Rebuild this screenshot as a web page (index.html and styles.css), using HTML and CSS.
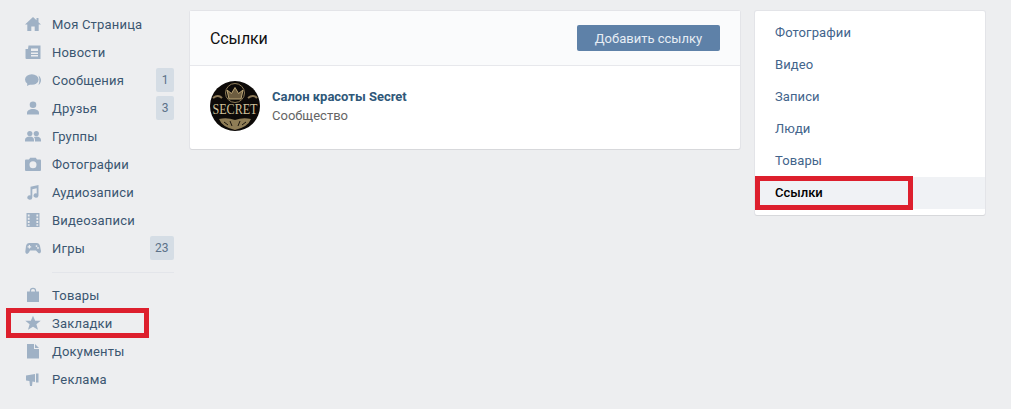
FILE: index.html
```html
<!DOCTYPE html>
<html lang="ru">
<head>
    <meta charset="UTF-8">
    <title>Ссылки</title>
    <link rel="stylesheet" href="styles.css">
</head>
<body>

<div class="page">
    <nav class="side-menu">
        <a class="side-item">
            <svg class="side-icon" viewBox="0 0 16 16"><path d="M8 1L0 8.500h2.300V15h4V10.500h3.400V15h4V8.500H16L13.500 6.200V2h-2v2.300z"/></svg>
            <span class="side-label">Моя Страница</span>
        </a>
        <a class="side-item">
            <svg class="side-icon" viewBox="0 0 16 16"><path fill-rule="evenodd" d="M3.500 1.500H15.500V15H1.500a1 1 0 0 1-1-1V5H3zM6 4.500V7h7V4.500zM6 8.500V10h7V8.500zM6 11v1.500h7V11z"/></svg>
            <span class="side-label">Новости</span>
        </a>
        <a class="side-item">
            <svg class="side-icon" viewBox="0 0 16 16"><ellipse cx="6.800" cy="7.500" rx="6.800" ry="5.300"/><path d="M2.500 10.500L2 14l4-2zM13.500 3.500c3.300 2.500 3.300 7 0 9.500 1.200-3.200 1.200-6.300 0-9.500z"/></svg>
            <span class="side-label">Сообщения</span>
            <span class="badge">1</span>
        </a>
        <a class="side-item">
            <svg class="side-icon" viewBox="0 0 16 16"><circle cx="8" cy="4.800" r="3.300"/><path d="M2 14.500v-1.800c0-2 2.500-3.700 6-3.700s6 1.700 6 3.700v1.800z"/></svg>
            <span class="side-label">Друзья</span>
            <span class="badge">3</span>
        </a>
        <a class="side-item">
            <svg class="side-icon" viewBox="0 0 16 16"><circle cx="4.800" cy="5.500" r="2.600"/><circle cx="11.300" cy="5.500" r="2.600"/><path d="M0 13.500v-1.500c0-2 2-3.500 4.800-3.500S9 10 9 12v1.500zM10 13.500V12c0-1.300-.4-2.300-1.100-3 .7-.3 1.500-.5 2.400-.5 2.700 0 4.700 1.500 4.700 3.500v1.500z"/></svg>
            <span class="side-label">Группы</span>
        </a>
        <a class="side-item">
            <svg class="side-icon" viewBox="0 0 16 16"><path fill-rule="evenodd" d="M1 3.500h3L5.200 1.800h5.600L12 3.500h3a1 1 0 0 1 1 1V14a1 1 0 0 1-1 1H1a1 1 0 0 1-1-1V4.500a1 1 0 0 1 1-1zM8 5.300a3.500 3.500 0 1 0 0 7 3.500 3.500 0 0 0 0-7z"/></svg>
            <span class="side-label">Фотографии</span>
        </a>
        <a class="side-item">
            <svg class="side-icon" viewBox="0 0 16 16"><path d="M5.500 2.800L13.500 1v10.500a2.500 2.200 0 1 1-1.800-2.100V4.200L7.300 5.200v8.300a2.500 2.200 0 1 1-1.800-2.100z"/></svg>
            <span class="side-label">Аудиозаписи</span>
        </a>
        <a class="side-item">
            <svg class="side-icon" viewBox="0 0 16 16"><path fill-rule="evenodd" d="M1.500 1h13v14h-13zM2.800 2.500v2h1.800v-2zM2.800 5.800v2h1.800v-2zM2.800 9v2h1.800V9zM2.800 12.200v1.500h1.800v-1.500zM11.400 2.500v2h1.800v-2zM11.400 5.800v2h1.800v-2zM11.400 9v2h1.800V9zM11.400 12.200v1.500h1.800v-1.500z"/></svg>
            <span class="side-label">Видеозаписи</span>
        </a>
        <a class="side-item">
            <svg class="side-icon" viewBox="0 0 16 16"><path fill-rule="evenodd" d="M4.300 3h7.400c1.800 0 2.800 1 3.300 3l.9 4.500c.3 1.700-.5 2.700-1.600 2.700-.9 0-1.500-.6-2.100-1.500L11 10.500H5l-.9 1.700c-.6.900-1.200 1.500-2.100 1.500-1.100 0-1.900-1-1.600-2.700L1 6c.5-2 1.500-3 3.300-3zM3.800 5v1.200H2.600v1.200h1.200v1.200H5V7.400h1.200V6.200H5V5zM11.500 5.200a.9.900 0 1 0 0 1.800.9.900 0 0 0 0-1.800zM13 7a.9.900 0 1 0 0 1.800.9.900 0 0 0 0-1.800z"/></svg>
            <span class="side-label">Игры</span>
            <span class="badge">23</span>
        </a>

        <div class="side-sep"></div>

        <a class="side-item">
            <svg class="side-icon" viewBox="0 0 16 16"><path fill-rule="evenodd" d="M2 4.500h2.800V4a3.200 3.200 0 0 1 6.400 0v.5H14V15H2zM6 4.500h4V4a2 2 0 0 0-4 0z"/></svg>
            <span class="side-label">Товары</span>
        </a>
        <a class="side-item">
            <svg class="side-icon" viewBox="0 0 16 16"><path d="M8 .8l2.200 5h5.500l-4.300 3.500 1.600 5.500L8 11.700l-5 3.100 1.600-5.500L.3 5.800h5.500z"/></svg>
            <span class="side-label">Закладки</span>
            <span class="mark mark-side"></span>
        </a>
        <a class="side-item">
            <svg class="side-icon" viewBox="0 0 16 16"><path d="M2 1h7v5h5v9.500H2zM10 1l4 4h-4z"/></svg>
            <span class="side-label">Документы</span>
        </a>
        <a class="side-item">
            <svg class="side-icon" viewBox="0 0 16 16"><path d="M1 4.500l9-1.500v8L7.500 10.600 7 15H5l-.6-4.900L1 9.500zM11 2.500h2.500v9H11z"/></svg>
            <span class="side-label">Реклама</span>
        </a>
    </nav>

    <main class="card links-card">
        <header class="card-head">
            <h2 class="card-title">Ссылки</h2>
            <button class="btn-add">Добавить ссылку</button>
        </header>
        <div class="link-row">
            <svg class="avatar" viewBox="0 0 50 50">
                <rect width="50" height="50" fill="#0d0a08"/>
                <circle cx="25" cy="12" r="9.500" fill="none" stroke="#8f7c58" stroke-width="1"/>
                <path d="M19 18l-2-9 4.500 3.500L25 6.500l3.500 6L33 9l-2 9z" fill="#6d5d40" stroke="#bda777" stroke-width="1"/>
                <path d="M3 17q5-4 9 0M38 17q5-4 9 0" fill="none" stroke="#8d7a58" stroke-width="2"/>
                <text class="avatar-text" x="25" y="33" text-anchor="middle" textLength="45" lengthAdjust="spacingAndGlyphs">SECRET</text>
                <path d="M9 38q8-2 16 1q8-3 16-1q-3 8-16 11q-13-3-16-11z" fill="#8f7d56"/>
                <path d="M14 41l4 3M20 40l2 5M30 40l-2 5M36 41l-4 3" stroke="#1c160e" stroke-width="1"/>
            </svg>
            <div class="link-info">
                <a class="link-name">Салон красоты Secret</a>
                <div class="link-type">Сообщество</div>
            </div>
        </div>
    </main>

    <aside class="card right-menu">
        <a class="right-item">Фотографии</a>
        <a class="right-item">Видео</a>
        <a class="right-item">Записи</a>
        <a class="right-item">Люди</a>
        <a class="right-item">Товары</a>
        <a class="right-item active">Ссылки<span class="mark mark-right"></span></a>
    </aside>
</div>

</body>
</html>
```

FILE: styles.css
```css
* {
    margin: 0;
    padding: 0;
    box-sizing: border-box;
}
body {
    font-family: Roboto, "Noto Sans", Arial, sans-serif;
    font-size: 13px;
    background-color: #edeef0;
    overflow: hidden;
}
.page {
    display: flex;
    align-items: flex-start;
    height: 409px;
    padding: 11px 0 0 0;
}

/* левое меню */
.side-menu {
    width: 190px;
    flex-shrink: 0;
    padding: 0 16px 0 25px;
    margin-top: -1px;
}
.side-item {
    position: relative;
    display: flex;
    align-items: center;
    height: 28px;
    color: #3b5670;
}
.side-icon {
    width: 16px;
    height: 16px;
    margin-right: 11px;
    flex-shrink: 0;
    fill: #9fb1c5;
}
.side-label {
    flex: 1;
    letter-spacing: 0.2px;
}
.badge {
    height: 24px;
    min-width: 18px;
    padding: 0 5.500px;
    line-height: 24px;
    text-align: center;
    font-size: 12px;
    color: #5b7188;
    background: #d5dde5;
    border-radius: 2px;
}
.side-sep {
    height: 1px;
    margin: 10px 0 8px 27px;
    background: #e3e5ea;
}

/* красные рамки */
.mark {
    position: absolute;
    border: 5px solid #dd1f2d;
}
.mark-side {
    left: -19px;
    top: -1px;
    width: 143px;
    height: 30px;
}
.mark-right {
    left: 0;
    top: -1px;
    width: 158px;
    height: 34px;
}

/* карточки */
.card {
    background: #fff;
    border-radius: 2px;
    box-shadow: 0 1px 0 0 #d7d8db, 0 0 0 1px #e3e4e8;
}
.links-card {
    width: 550px;
    height: 138px;
    flex-shrink: 0;
}
.card-head {
    display: flex;
    align-items: center;
    justify-content: space-between;
    height: 55px;
    padding: 0 20px;
    background: #fafbfc;
    border-bottom: 1px solid #e7e8ec;
}
.card-title {
    font-size: 16px;
    font-weight: 400;
    letter-spacing: -0.1px;
    color: #111;
}
.btn-add {
    width: 143px;
    height: 26px;
    font-family: inherit;
    font-size: 13px;
    color: #e6edf5;
    background: #5e81a8;
    border: none;
    border-radius: 2px;
}
.link-row {
    display: flex;
    align-items: center;
    padding: 15px 20px;
}
.avatar {
    width: 50px;
    height: 50px;
    margin-right: 12px;
    border-radius: 50%;
}
.avatar-text {
    font-family: "Liberation Serif", serif;
    font-size: 14px;
    fill: #d2c39b;
}
.link-name {
    display: block;
    font-weight: 700;
    font-size: 13px;
    color: #2f5879;
    margin-bottom: 4px;
}
.link-type {
    font-size: 13px;
    color: #656565;
}

/* правое меню */
.right-menu {
    width: 230px;
    margin-left: 15px;
    padding: 6px 0;
    flex-shrink: 0;
}
.right-item {
    position: relative;
    display: block;
    height: 32px;
    line-height: 32px;
    padding-left: 20px;
    letter-spacing: 0.1px;
    color: #42648b;
}
.right-item.active {
    font-weight: 500;
    letter-spacing: 0;
    color: #000;
    background: #f0f2f5;
}
```
